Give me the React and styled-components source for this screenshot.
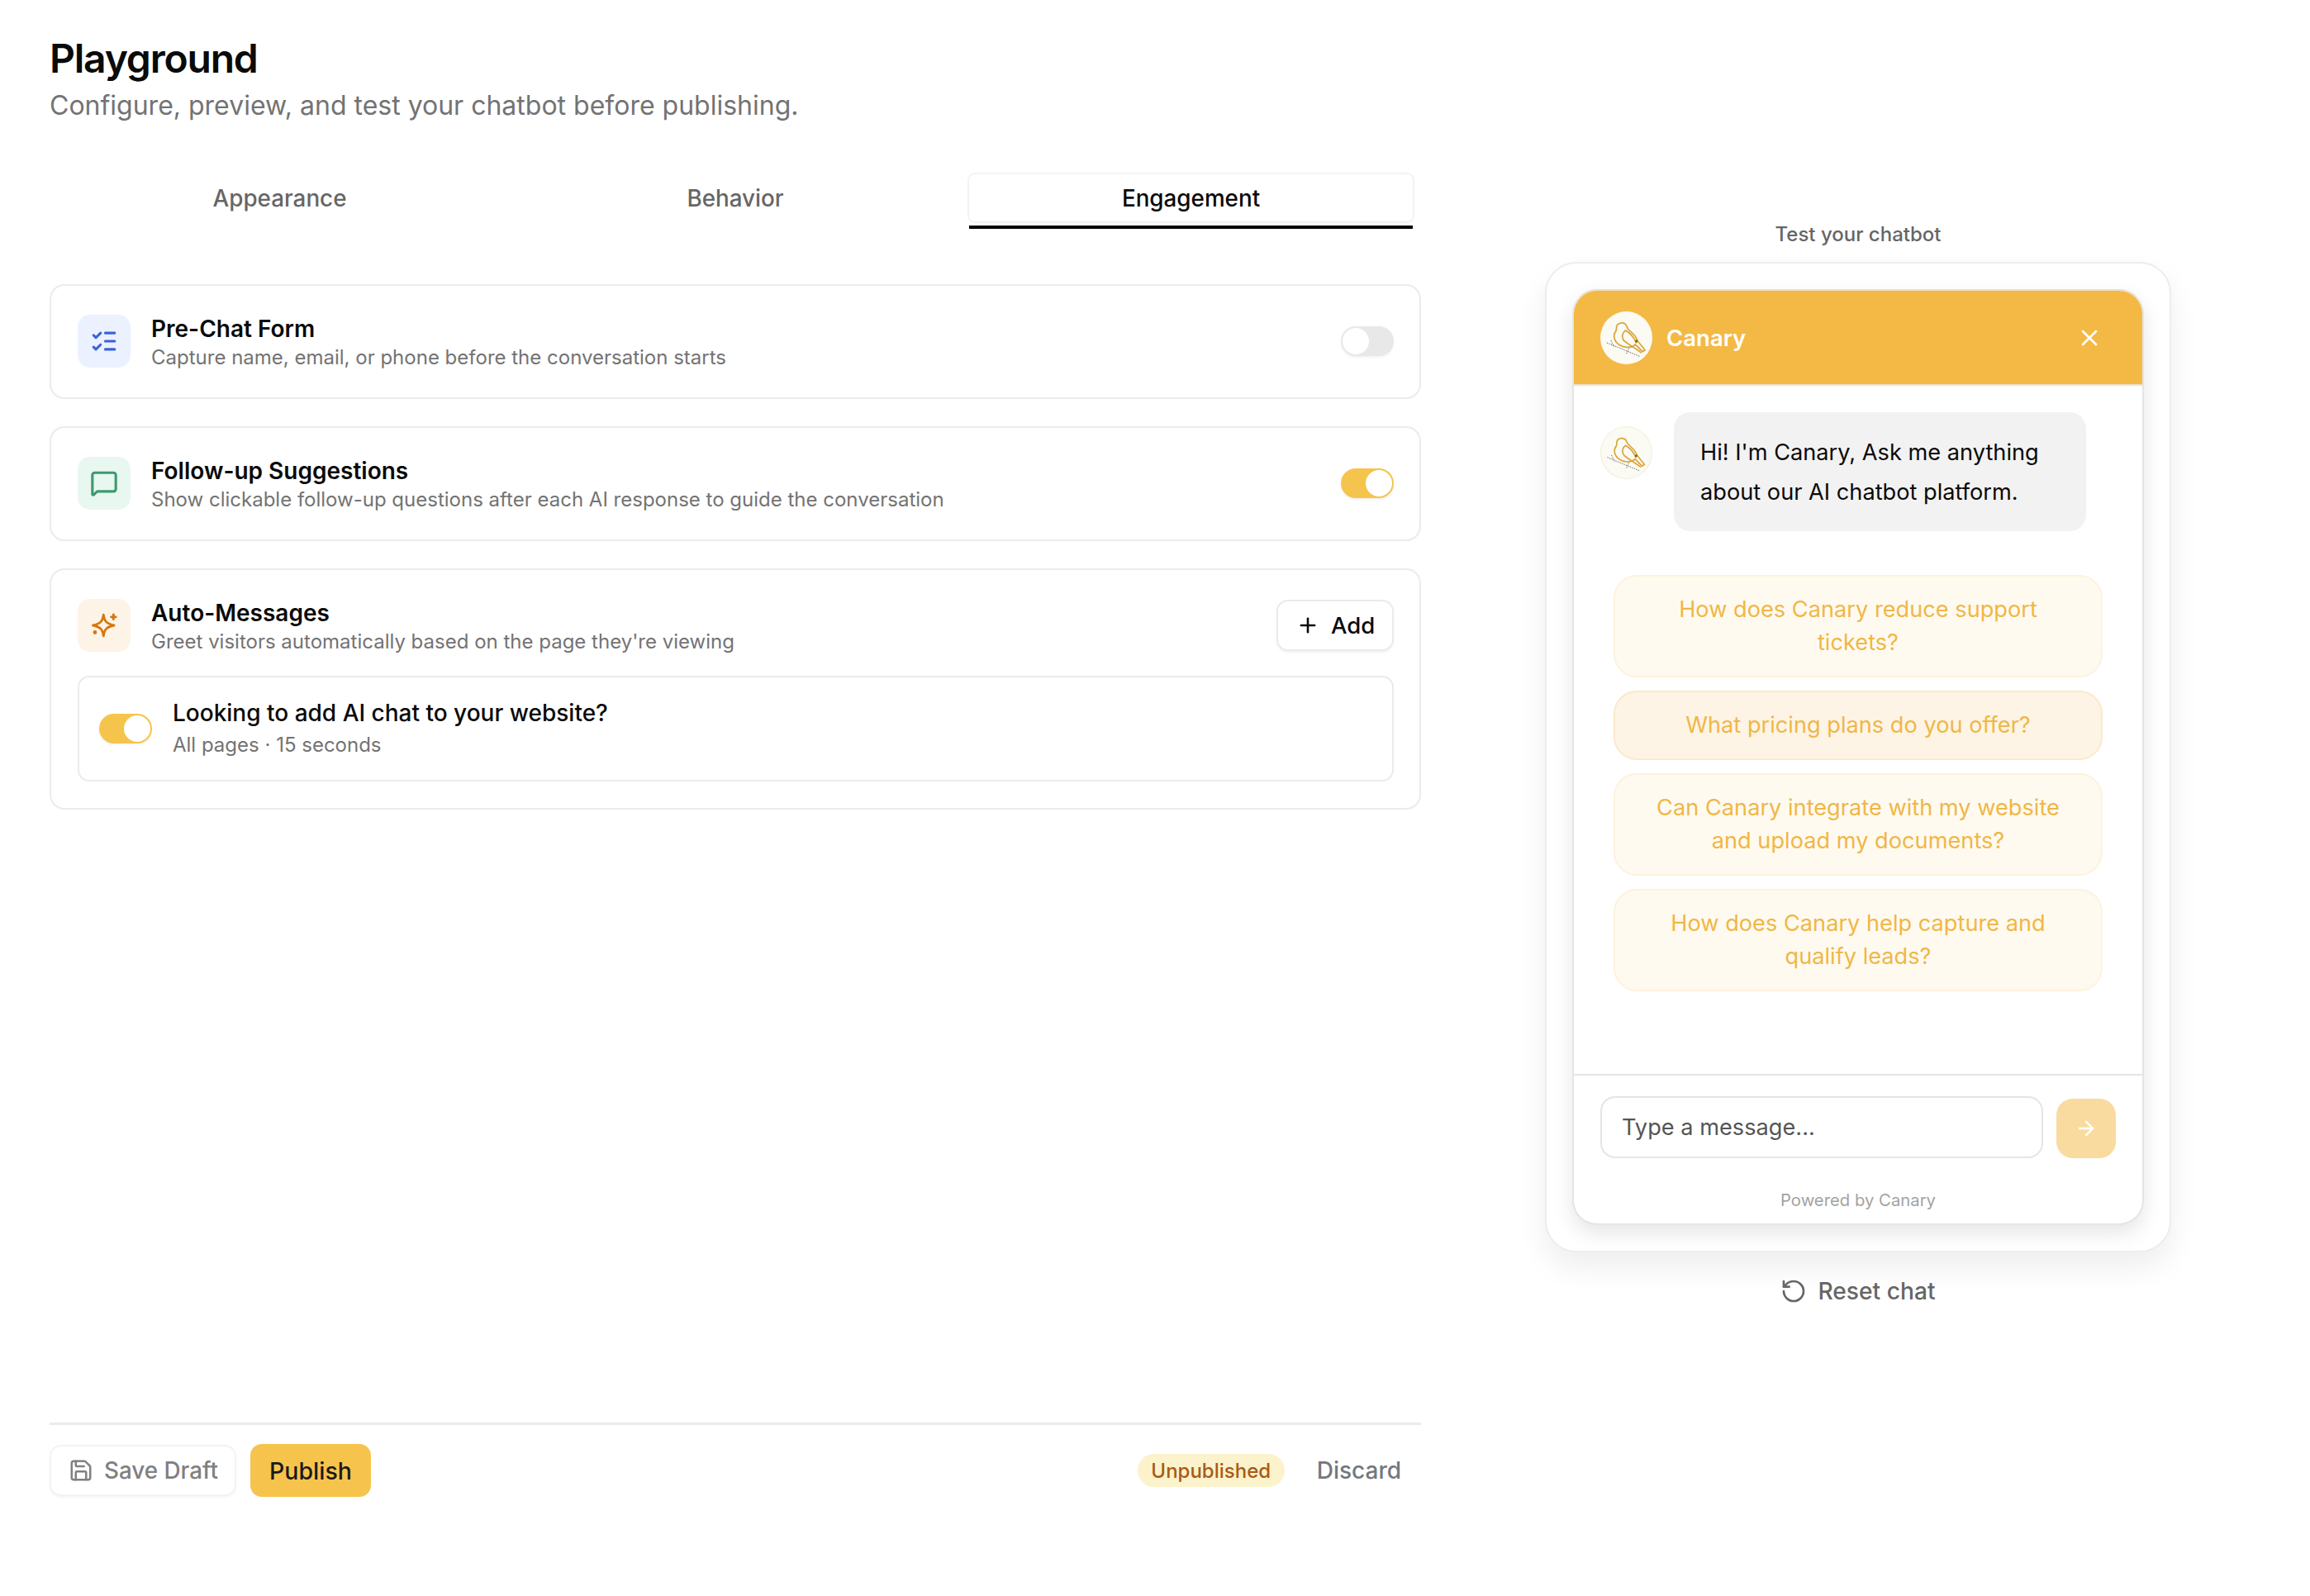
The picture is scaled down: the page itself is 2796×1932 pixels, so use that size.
import React from "react";
import styled, { createGlobalStyle } from "styled-components";
import {
  ArrowRight,
  ListChecks,
  MessageSquare,
  Plus,
  RotateCcw,
  Save,
  X,
} from "lucide-react";

const GlobalStyle = createGlobalStyle`
  * { box-sizing: border-box; }
  html, body {
    margin: 0;
    background: #ffffff;
    font-family: "Inter", "Liberation Sans", sans-serif;
    color: #0a0a0a;
  }
`;

const Page = styled.div`
  display: grid;
  grid-template-columns: 1660px 758px;
  column-gap: 150px;
  width: 2796px;
  height: 1932px;
  padding: 0 0 0 60px;
`;

const Left = styled.div`
  display: flex;
  flex-direction: column;
  padding: 41px 0 120px;
`;

const Title = styled.h1`
  margin: 0;
  font-size: 48px;
  line-height: 60px;
  font-weight: 600;
  letter-spacing: -1.2px;
  color: #0a0a0a;
`;

const Subtitle = styled.p`
  margin: 5px 0 0;
  font-size: 32px;
  line-height: 44px;
  color: #737373;
`;

const Tabs = styled.div`
  display: grid;
  grid-template-columns: repeat(3, 1fr);
  column-gap: 10.5px;
  padding: 0 8px;
  margin-top: 59px;
  height: 70px;
`;

const Tab = styled.div`
  position: relative;
  display: flex;
  align-items: center;
  justify-content: center;
  height: 61px;
  font-size: 27.8px;
  font-weight: 500;
  color: ${({ $active }) => ($active ? "#0a0a0a" : "#666666")};
  border: 2px solid ${({ $active }) => ($active ? "#f3f3f3" : "transparent")};
  border-radius: 9px;
  &::after {
    content: "";
    display: ${({ $active }) => ($active ? "block" : "none")};
    position: absolute;
    left: 0;
    right: 0;
    bottom: -9px;
    height: 4px;
    background: #000000;
  }
`;

const Cards = styled.div`
  display: flex;
  flex-direction: column;
  gap: 33px;
  margin-top: 65px;
`;

const Card = styled.section`
  display: flex;
  flex-direction: column;
  gap: 29px;
  padding: 35px 31px ${({ $compact }) => ($compact ? "32px" : "36px")} 32px;
  border: 2px solid #ebebeb;
  border-radius: 18px;
  background: #ffffff;
`;

const FeatureRow = styled.div`
  display: flex;
  align-items: center;
  gap: 25px;
  height: 64px;
`;

const IconBox = styled.div`
  display: flex;
  align-items: center;
  justify-content: center;
  flex: none;
  width: 64px;
  height: 64px;
  border-radius: 15px;
  background: ${({ $bg }) => $bg};
  color: ${({ $fg }) => $fg};
`;

const FeatureText = styled.div`
  flex: 1;
  display: flex;
  flex-direction: column;
  gap: 2px;
  padding-top: 3px;
`;

const FeatureTitle = styled.div`
  font-size: 28px;
  line-height: 34px;
  font-weight: 600;
  color: #0a0a0a;
`;

const FeatureDesc = styled.div`
  font-size: 24px;
  line-height: 32px;
  color: #737373;
`;

const Toggle = styled.div`
  display: flex;
  flex: none;
  justify-content: ${({ $on }) => ($on ? "flex-end" : "flex-start")};
  align-items: center;
  width: 64px;
  height: 36px;
  padding: 2px;
  border-radius: 18px;
  background: ${({ $on }) => ($on ? "#f5c44c" : "#e8e8e9")};
  box-shadow: 0 2px 3px rgba(0, 0, 0, 0.05);
`;

const Knob = styled.div`
  width: 32px;
  height: 32px;
  border-radius: 50%;
  background: #ffffff;
`;

const AddButton = styled.button`
  display: flex;
  align-items: center;
  gap: 14px;
  height: 62px;
  width: 142px;
  padding: 0 0 0 22px;
  font: 500 27.5px "Inter", sans-serif;
  color: #0a0a0a;
  background: #ffffff;
  border: 2px solid #ebebeb;
  border-radius: 14px;
  box-shadow: 0 2px 3px rgba(0, 0, 0, 0.05);
`;

const RuleCard = styled.div`
  display: flex;
  align-items: center;
  gap: 25px;
  height: 128px;
  padding: 0 24px;
  border: 2px solid #ebebeb;
  border-radius: 14px;
`;

const RuleText = styled.div`
  margin-top: -2px;
`;

const RuleTitle = styled.div`
  font-size: 28px;
  line-height: 38px;
  font-weight: 500;
  color: #0a0a0a;
`;

const RuleMeta = styled.div`
  margin-top: 4px;
  font-size: 24px;
  line-height: 32px;
  color: #737373;
`;

const Footer = styled.div`
  display: flex;
  align-items: center;
  gap: 17px;
  margin-top: auto;
  padding-top: 23px;
  border-top: 3px solid #ebebeb;
`;

const DraftButton = styled.button`
  display: flex;
  align-items: center;
  gap: 13px;
  width: 226px;
  height: 62px;
  padding: 0 0 0 21px;
  font: 500 27.8px "Inter", sans-serif;
  color: #808080;
  background: #ffffff;
  border: 2px solid #f3f3f3;
  border-radius: 14px;
  box-shadow: 0 2px 3px rgba(0, 0, 0, 0.04);
`;

const PublishButton = styled.button`
  width: 146px;
  height: 64px;
  font: 500 28.5px "Inter", sans-serif;
  color: #1a1a1a;
  background: #f6c44d;
  border: none;
  border-radius: 14px;
`;

const Spacer = styled.div`
  flex: 1;
`;

const StatusPill = styled.div`
  display: flex;
  align-items: center;
  justify-content: center;
  width: 178px;
  height: 40px;
  font-size: 24px;
  font-weight: 500;
  color: #a85a14;
  background: #fcf2cc;
  border-radius: 20px;
`;

const Discard = styled.div`
  margin: 0 24px 0 22px;
  font-size: 28px;
  font-weight: 500;
  color: #737780;
`;

const Right = styled.div`
  display: flex;
  flex-direction: column;
  align-items: center;
  padding-top: 267px;
`;

const PreviewLabel = styled.div`
  font-size: 24px;
  line-height: 34px;
  font-weight: 500;
  color: #666666;
  margin-bottom: 16px;
`;

const PreviewFrame = styled.div`
  width: 758px;
  height: 1199px;
  padding: 31px;
  background: #ffffff;
  border: 2px solid #ededed;
  border-radius: 38px;
  box-shadow: 0 18px 36px rgba(0, 0, 0, 0.07);
`;

const Chat = styled.div`
  display: flex;
  flex-direction: column;
  height: 100%;
  overflow: hidden;
  border: 2px solid #e5e5e5;
  border-top-color: #eadfca;
  border-radius: 30px;
  background: #ffffff;
  box-shadow: 0 10px 24px rgba(0, 0, 0, 0.1);
`;

const ChatHeader = styled.div`
  display: flex;
  align-items: center;
  gap: 17px;
  flex: none;
  height: 115px;
  padding: 0 48px 0 32px;
  background: #f4b944;
  border-bottom: 2px solid #eee0c8;
`;

const Avatar = styled.div`
  display: flex;
  align-items: center;
  justify-content: center;
  flex: none;
  width: 63px;
  height: 64px;
  margin-top: ${({ $offset }) => $offset || 0}px;
  border-radius: 50%;
  background: #fbfaf3;
  border: ${({ $outlined }) => ($outlined ? "1px solid #f2eedb" : "none")};
`;

const ChatName = styled.div`
  flex: 1;
  font-size: 27.5px;
  font-weight: 600;
  color: #ffffff;
`;

const ChatBody = styled.div`
  flex: 1;
  display: flex;
  flex-direction: column;
  padding: 32px 32px 0;
`;

const Message = styled.div`
  display: flex;
  align-items: flex-start;
  gap: 26px;
`;

const Bubble = styled.div`
  width: 499px;
  height: 144px;
  padding: 25px 32px 0;
  font-size: 27.2px;
  line-height: 48px;
  color: #0a0a0a;
  background: #f2f2f2;
  border-radius: 20px;
`;

const Suggestions = styled.div`
  display: flex;
  flex-direction: column;
  gap: 16px;
  width: 592px;
  margin: 53px 0 0 16px;
`;

const Suggestion = styled.div`
  display: flex;
  align-items: center;
  justify-content: center;
  min-height: 83px;
  padding: 20px 40px;
  text-align: center;
  font-size: 27.2px;
  line-height: 40px;
  color: #f0b746;
  background: ${({ $hovered }) => ($hovered ? "#fdf4e6" : "#fffaf0")};
  border: 2px solid ${({ $hovered }) => ($hovered ? "#fbe9cb" : "#fdf2de")};
  border-radius: 28px;
`;

const InputRow = styled.div`
  display: flex;
  align-items: flex-end;
  gap: 16px;
  flex: none;
  padding: 25px 32px 0 32px;
  border-top: 2px solid #e5e5e5;
`;

const MessageInput = styled.input`
  flex: 1;
  min-width: 0;
  height: 75px;
  padding: 0 24px;
  font: 400 27.2px "Inter", sans-serif;
  background: #ffffff;
  border: 2px solid #e5e5e5;
  border-radius: 18px;
  outline: none;
  &::placeholder {
    color: #555555;
    opacity: 1;
  }
`;

const SendButton = styled.button`
  display: flex;
  align-items: center;
  justify-content: center;
  flex: none;
  width: 72px;
  height: 72px;
  color: #ffffff;
  background: #f9dba0;
  border: none;
  border-radius: 20px;
`;

const Powered = styled.div`
  flex: none;
  padding: 37px 0 14px;
  text-align: center;
  font-size: 20.3px;
  line-height: 28px;
  color: #a3a3a3;
`;

const ResetChat = styled.div`
  display: flex;
  align-items: center;
  gap: 13px;
  margin-top: 29px;
  font-size: 28.2px;
  line-height: 36px;
  font-weight: 500;
  color: #666666;
`;

// star sits in the middle of the box, plus top right, dot lower left
const SparkleIcon = () => (
  <svg width="34" height="34" viewBox="0 0 24 24" fill="none" stroke="currentColor" strokeWidth="2" strokeLinecap="round" strokeLinejoin="round">
    <path d="M11.5 3C12.2 8.2 13.8 10.6 20.5 12C13.8 13.4 12.2 15.8 11.5 21C10.8 15.8 9.2 13.4 2.5 12C9.2 10.6 10.8 8.2 11.5 3Z" />
    <path d="M20 2.8V6.8M18 4.8H22" />
    <circle cx="4.2" cy="18" r="0.7" fill="currentColor" />
  </svg>
);

const BirdLogo = () => (
  <svg width="63" height="64" viewBox="0 0 64 64" fill="none">
    <g stroke="#dba63a" strokeWidth="1.8" strokeLinejoin="round" strokeLinecap="round">
      <path d="M20 18C21 13 30 12 32 17C33 20 34 22 37 24C42 28 45 33 46 36L55 47L52 49L43 40C40 44 30 45 24 41C17 37 15 29 19 24C20 22 20 20 20 18Z" />
      <path d="M31 23C26 26 26 34 31 37C36 41 45 46 50 50" />
      <path d="M31 23C36 25 42 32 44 38" />
    </g>
    <circle cx="44.5" cy="36" r="1.6" fill="#8a5a20" />
    <g stroke="#4a4a3c" strokeWidth="0.9" strokeDasharray="1.4 1.4">
      <path d="M8 38L49 55" />
      <path d="M13 35L17 43" />
      <path d="M35 45L32 52" />
    </g>
  </svg>
);

const features = [
  {
    title: "Pre-Chat Form",
    desc: "Capture name, email, or phone before the conversation starts",
    Icon: ListChecks,
    bg: "#ebf1ff",
    fg: "#3b63d9",
    on: false,
  },
  {
    title: "Follow-up Suggestions",
    desc: "Show clickable follow-up questions after each AI response to guide the conversation",
    Icon: MessageSquare,
    bg: "#e8f7f0",
    fg: "#3d9970",
    on: true,
  },
];

const questions = [
  "How does Canary reduce support tickets?",
  "What pricing plans do you offer?",
  "Can Canary integrate with my website and upload my documents?",
  "How does Canary help capture and qualify leads?",
];

const App = () => {
  return (
    <>
      <GlobalStyle />
      <Page>
        <Left>
          <Title>Playground</Title>
          <Subtitle>Configure, preview, and test your chatbot before publishing.</Subtitle>
          <Tabs>
            <Tab>Appearance</Tab>
            <Tab>Behavior</Tab>
            <Tab $active>Engagement</Tab>
          </Tabs>
          <Cards>
            {features.map(({ title, desc, Icon, bg, fg, on }) => (
              <Card key={title}>
                <FeatureRow>
                  <IconBox $bg={bg} $fg={fg}>
                    <Icon size={34} strokeWidth={2.2} />
                  </IconBox>
                  <FeatureText>
                    <FeatureTitle>{title}</FeatureTitle>
                    <FeatureDesc>{desc}</FeatureDesc>
                  </FeatureText>
                  <Toggle $on={on}>
                    <Knob />
                  </Toggle>
                </FeatureRow>
              </Card>
            ))}
            <Card $compact>
              <FeatureRow>
                <IconBox $bg="#fdf3e7" $fg="#d4770f">
                  <SparkleIcon />
                </IconBox>
                <FeatureText>
                  <FeatureTitle>Auto-Messages</FeatureTitle>
                  <FeatureDesc>Greet visitors automatically based on the page they're viewing</FeatureDesc>
                </FeatureText>
                <AddButton>
                  <Plus size={28} strokeWidth={2.2} />
                  Add
                </AddButton>
              </FeatureRow>
              <RuleCard>
                <Toggle $on>
                  <Knob />
                </Toggle>
                <RuleText>
                  <RuleTitle>Looking to add AI chat to your website?</RuleTitle>
                  <RuleMeta>All pages · 15 seconds</RuleMeta>
                </RuleText>
              </RuleCard>
            </Card>
          </Cards>
          <Footer>
            <DraftButton>
              <Save size={30} strokeWidth={2} />
              Save Draft
            </DraftButton>
            <PublishButton>Publish</PublishButton>
            <Spacer />
            <StatusPill>Unpublished</StatusPill>
            <Discard>Discard</Discard>
          </Footer>
        </Left>
        <Right>
          <PreviewLabel>Test your chatbot</PreviewLabel>
          <PreviewFrame>
            <Chat>
              <ChatHeader>
                <Avatar>
                  <BirdLogo />
                </Avatar>
                <ChatName>Canary</ChatName>
                <X size={32} color="#ffffff" strokeWidth={2} />
              </ChatHeader>
              <ChatBody>
                <Message>
                  <Avatar $outlined $offset={17}>
                    <BirdLogo />
                  </Avatar>
                  <Bubble>Hi! I'm Canary, Ask me anything about our AI chatbot platform.</Bubble>
                </Message>
                <Suggestions>
                  {questions.map((q, i) => (
                    <Suggestion key={q} $hovered={i === 1}>
                      {q}
                    </Suggestion>
                  ))}
                </Suggestions>
              </ChatBody>
              <InputRow>
                <MessageInput placeholder="Type a message..." />
                <SendButton>
                  <ArrowRight size={28} strokeWidth={2} />
                </SendButton>
              </InputRow>
              <Powered>Powered by Canary</Powered>
            </Chat>
          </PreviewFrame>
          <ResetChat>
            <RotateCcw size={32} strokeWidth={2} />
            Reset chat
          </ResetChat>
        </Right>
      </Page>
    </>
  );
};

export default App;
